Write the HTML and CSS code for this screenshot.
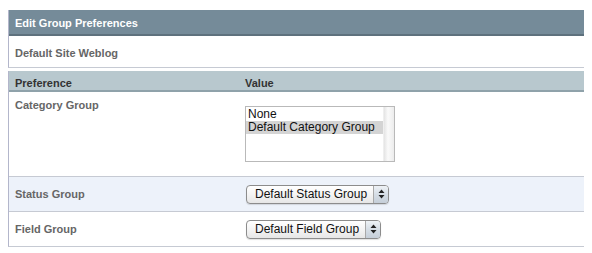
FILE: index.html
```html
<!DOCTYPE html>
<html>
<head>
<meta charset="utf-8">
<link rel="stylesheet" href="styles.css">
</head>
<body>
<div class="panel">
  <div class="panel-title">Edit Group Preferences</div>
  <div class="panel-sub">Default Site Weblog</div>
</div>
<div class="prefs">
  <div class="prefs-head">
    <div class="col-pref">Preference</div>
    <div class="col-val">Value</div>
  </div>
  <div class="row row-tall">
    <div class="label">Category Group</div>
    <div class="value">
      <div class="listbox">
        <div class="options">
          <div class="opt">None</div>
          <div class="opt opt-sel">Default Category Group</div>
        </div>
        <div class="scrolltrack"></div>
      </div>
    </div>
  </div>
  <div class="row row-alt">
    <div class="label">Status Group</div>
    <div class="value">
      <span class="popup">
        <span class="popup-text">Default Status Group</span>
        <span class="popup-arrows"><svg width="7" height="10" viewBox="0 0 7 10"><path d="M3.5 0.5 L6.5 4 H0.5 Z M3.5 9.5 L6.5 6 H0.5 Z" fill="#222"/></svg></span>
      </span>
    </div>
  </div>
  <div class="row">
    <div class="label">Field Group</div>
    <div class="value">
      <span class="popup">
        <span class="popup-text">Default Field Group</span>
        <span class="popup-arrows"><svg width="7" height="10" viewBox="0 0 7 10"><path d="M3.5 0.5 L6.5 4 H0.5 Z M3.5 9.5 L6.5 6 H0.5 Z" fill="#222"/></svg></span>
      </span>
    </div>
  </div>
</div>
</body>
</html>
```
FILE: styles.css
```css
* { box-sizing: border-box; }
body {
  margin: 8px;
  padding-top: 2px;
  background: #fff;
  font-family: "Liberation Sans", Arial, sans-serif;
}
.panel {
  width: 577px;
  border-left: 1px solid #b3b6cb;
  border-right: 1px solid #b3b6cb;
  border-bottom: 1px solid #c6cad3;
}
.panel-title {
  height: 26px;
  background: #758b99;
  border-bottom: 2px solid #5e717d;
  color: #fff;
  font-weight: bold;
  font-size: 11px;
  padding: 7px 0 0 6px;
}
.panel-sub {
  height: 31px;
  color: #666;
  font-weight: bold;
  font-size: 11px;
  padding: 11px 0 0 6px;
}
.prefs {
  width: 577px;
  margin-top: 3px;
  border-left: 1px solid #b3b6cb;
  border-right: 1px solid #b3b6cb;
  border-bottom: 1px solid #c6cad3;
}
.prefs-head {
  display: grid;
  grid-template-columns: 236px 1fr;
  height: 21px;
  background: #b8c8ce;
  border-bottom: 2px solid #8fa2aa;
  color: #333;
  font-weight: bold;
  font-size: 11px;
  padding-top: 6px;
}
.col-pref { padding-left: 6px; }
.row {
  display: grid;
  grid-template-columns: 236px 1fr;
  height: 35px;
  border-top: 1px solid #c6cad3;
  align-items: center;
}
.row-tall {
  height: 84px;
  border-top: none;
  align-items: start;
}
.row-alt { background: #edf2fa; }
.label {
  padding-left: 6px;
  color: #666;
  font-weight: bold;
  font-size: 11px;
}
.row-tall .label { padding-top: 7px; }
.row-tall .value { padding-top: 14px; }
.listbox {
  width: 150px;
  height: 56px;
  border: 1px solid #b9b9b9;
  background: #fff;
  display: flex;
}
.options {
  flex: 1;
  padding-top: 1px;
  font-family: "Liberation Sans", Arial, sans-serif;
  font-size: 12px;
  color: #111;
}
.opt {
  height: 13px;
  line-height: 13px;
  padding-left: 2px;
}
.opt-sel { background: #d4d4d4; }
.scrolltrack {
  width: 11px;
  background: linear-gradient(to right, #e4e4e4, #fafafa 40%, #ececec);
  border-left: 1px solid #efefef;
}
.popup {
  position: relative;
  display: inline-flex;
  align-items: center;
  height: 19px;
  margin-left: 1px;
  border: 1px solid #8c8c8c;
  border-radius: 4px;
  background: linear-gradient(to bottom, #ffffff, #f4f4f4 50%, #e6e6e6);
  box-shadow: 0 1px 1px rgba(0,0,0,0.12);
  font-family: "Liberation Sans", Arial, sans-serif;
  font-size: 12px;
  color: #111;
}
.popup-text { padding: 0 6px 0 8px; }
.popup-arrows {
  display: flex;
  align-items: center;
  justify-content: center;
  width: 15px;
  height: 17px;
  border-left: 1px solid #a8a8a8;
  border-radius: 0 3px 3px 0;
  background: linear-gradient(to bottom, #eef2f6, #d5dde5 50%, #c5ced8);
}
```
